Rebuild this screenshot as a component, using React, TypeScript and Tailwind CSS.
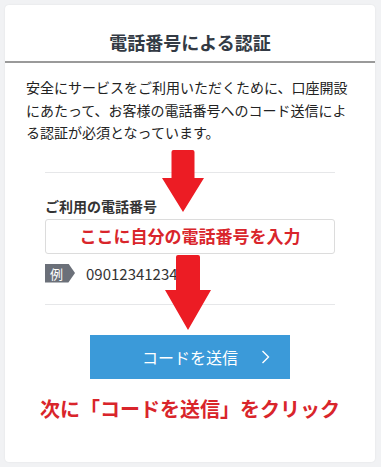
import React from 'react';

interface DownArrowProps {
  className: string;
  w: number;
  h: number;
  shaft: number;
  headTop: number;
}

function DownArrow({ className, w, h, shaft, headTop }: DownArrowProps) {
  const l = (w - shaft) / 2;
  const r = l + shaft;
  return (
    <svg className={className} width={w} height={h} viewBox={`0 0 ${w} ${h}`}>
      <path
        d={`M${l} 2 Q${l} 0 ${l + 2} 0 L${r - 2} 0 Q${r} 0 ${r} 2 L${r} ${headTop} L${w} ${headTop} L${w / 2} ${h} L0 ${headTop} L${l} ${headTop} Z`}
        fill="#ec1c24"
      />
    </svg>
  );
}

export default function App() {
  return (
    <div
      className="w-[381px] h-[467px] bg-[#f1f2f4] p-[5px] pb-[5px]"
      style={{ fontFamily: '"Noto Sans CJK JP", "Noto Sans", sans-serif' }}
    >
      <div className="relative h-[457px] w-[370px] rounded-[4px] bg-white shadow-[0_0_2px_rgba(0,0,0,0.08)]">
        <div className="flex h-[58px] items-end justify-center pb-[7px] border-b-2 border-[#9a9a9a]">
          <h1 className="text-[18px] font-bold leading-[24px] text-[#333a44]">電話番号による認証</h1>
        </div>

        <p className="px-[21px] pt-[13px] text-[14px] leading-[22.5px] text-[#222]">
          安全にサービスをご利用いただくために、口座開設にあたって、お客様の電話番号へのコード送信による認証が必須となっています。
        </p>

        <div className="mx-[40px] mt-[28px] border-t border-[#e6e7e9] pt-[23px]">
          <div className="text-[14px] font-bold leading-[20px] text-[#333]">ご利用の電話番号</div>
          <div className="mt-[3px] flex h-[35px] items-center justify-center rounded-[3px] border border-[#dcdcdc] bg-white">
            <span className="text-[17px] font-bold text-[#d9252b]">ここに自分の電話番号を入力</span>
          </div>
          <div className="mt-[10px] flex items-center gap-[11px]">
            <span className="flex h-[19px] w-[30px] items-center pl-[5px] text-[13px] leading-none text-white bg-[#6b7079] [clip-path:polygon(0_0,78%_0,100%_50%,78%_100%,0_100%)]">
              例
            </span>
            <span className="text-[15px] leading-[19px] text-[#333]">09012341234</span>
          </div>
          <div className="mt-[21px] border-t border-[#e6e7e9]" />
        </div>

        <div className="mt-[30px] flex justify-center">
          <button className="relative flex h-[44px] w-[200px] items-center justify-center bg-[#3b9ad9] text-white">
            <span className="text-[16px] leading-none">コードを送信</span>
            <svg className="absolute right-[20px] top-[15px]" width="9" height="14" viewBox="0 0 9 14">
              <path d="M1.5 1 L7.5 7 L1.5 13" fill="none" stroke="#fff" strokeWidth="1.4" />
            </svg>
          </button>
        </div>

        <div className="mt-[17px] text-center text-[20px] font-bold leading-[26px] text-[#d9252b]">
          次に「コードを送信」をクリック
        </div>

        <DownArrow className="absolute left-[157px] top-[145px]" w={42} h={62} shaft={23} headTop={28} />
        <DownArrow className="absolute left-[160px] top-[250px]" w={46} h={75} shaft={24} headTop={35} />
      </div>
    </div>
  );
}
